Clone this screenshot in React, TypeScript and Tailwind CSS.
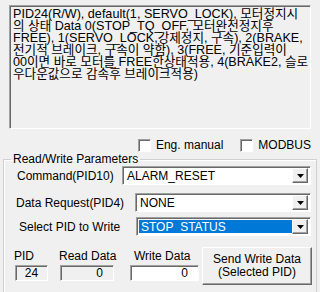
const font = "font-['Liberation_Sans','Noto_Sans_CJK_KR',sans-serif]";

const sunken =
  "border border-t-[#a0a0a0] border-l-[#a0a0a0] border-b-white border-r-white shadow-[inset_1px_1px_0_#696969]";

const lines = [
  "PID24(R/W), default(1, SERVO_LOCK), 모터정지시",
  "의 상태 Data 0(STOP_TQ_OFF, 모터완전정지후",
  "FREE), 1(SERVO_LOCK,강제정지, 구속), 2(BRAKE,",
  "전기적 브레이크, 구속이 약함), 3(FREE, 기준입력이",
  "00이면 바로 모터를 FREE한상태적용, 4(BRAKE2, 슬로",
  "우다운값으로 감속후 브레이크적용)",
];

const Checkbox = ({ label }: { label: string }) => (
  <div className="flex items-center gap-[5px]">
    <span className={`w-[13px] h-[13px] bg-white ${sunken}`} />
    <span>{label}</span>
  </div>
);

const Combo = ({ value, selected }: { value: string; selected?: boolean }) => (
  <div className={`flex-1 h-[19px] bg-white flex items-center p-[2px] ${sunken}`}>
    <div
      className={`flex-1 h-full flex items-center pl-[2px] leading-none ${
        selected ? "bg-[#0078d7] text-white" : ""
      }`}
    >
      {value}
    </div>
    <div className="w-[16px] h-[15px] bg-[#f0f0f0] flex items-center justify-center border border-t-white border-l-white border-b-[#696969] border-r-[#696969] shadow-[inset_-1px_-1px_0_#a0a0a0]">
      <svg width="7" height="4" viewBox="0 0 7 4">
        <path d="M0 0h7L3.5 4z" fill="#000" />
      </svg>
    </div>
  </div>
);

const App = () => {
  return (
    <div className={`w-[320px] h-[292px] overflow-hidden bg-[#f0f0f0] text-black text-[12px] ${font}`}>
      {/* 설명 텍스트 */}
      <div className="pt-[5px] px-[9px]">
        <div
          className={`h-[124px] bg-[#f0f0f0] pl-[3px] pt-[2px] text-[12.6px] leading-[12px] whitespace-nowrap overflow-hidden ${sunken}`}
        >
          {lines.map((l) => (
            <div key={l}>{l}</div>
          ))}
        </div>
      </div>

      {/* 체크박스 */}
      <div className="flex justify-end items-center gap-[17px] mt-[9px] pr-[9px] h-[14px]">
        <Checkbox label="Eng. manual" />
        <Checkbox label="MODBUS" />
      </div>

      {/* Read/Write Parameters */}
      <fieldset className="mx-[3px] border border-[#d0d0d0] shadow-[inset_1px_1px_0_#fff] pb-[10px]">
        <legend className="ml-[7px] px-[2px] leading-[14px]">Read/Write Parameters</legend>

        <div className="flex items-center pl-[13px] pr-[5px]">
          <span className="w-[105px] whitespace-nowrap">Command(PID10)</span>
          <Combo value="ALARM_RESET" />
        </div>

        <div className="flex items-center mt-[8px] pl-[12px] pr-[5px]">
          <span className="w-[119px] whitespace-nowrap">Data Request(PID4)</span>
          <Combo value="NONE" />
        </div>

        <div className="flex items-center mt-[5px] pl-[15px] pr-[5px]">
          <span className="w-[117px] whitespace-nowrap">Select PID to Write</span>
          <Combo value="STOP_STATUS" selected />
        </div>

        <div className="flex items-start mt-[11px] pl-[10px] pr-[4px] whitespace-nowrap">
          <div className="flex flex-col w-[34px] mt-[2px]">
            <span className="leading-[14px]">PID</span>
            <div className={`mt-[2px] ml-[1px] h-[16px] flex items-center justify-center leading-none ${sunken}`}>
              24
            </div>
          </div>
          <div className="flex flex-col w-[54px] ml-[12px] mt-[2px]">
            <span className="leading-[14px] -ml-[1px]">Read Data</span>
            <div className={`mt-[2px] h-[16px] flex items-center justify-end pr-[10px] leading-none ${sunken}`}>0</div>
          </div>
          <div className="flex flex-col w-[69px] ml-[16px] mt-[2px]">
            <span className="leading-[14px] ml-[4px]">Write Data</span>
            <div className={`mt-[2px] h-[16px] bg-white flex items-center justify-end pr-[10px] leading-none ${sunken}`}>
              0
            </div>
          </div>
          <button
            type="button"
            className="ml-[3px] flex-1 h-[38px] bg-[#f0f0f0] leading-[13px] text-center border border-t-white border-l-white border-b-[#696969] border-r-[#696969] shadow-[inset_-1px_-1px_0_#a0a0a0]"
          >
            Send Write Data
            <br />
            (Selected PID)
          </button>
        </div>
      </fieldset>
    </div>
  );
};

export default App;
